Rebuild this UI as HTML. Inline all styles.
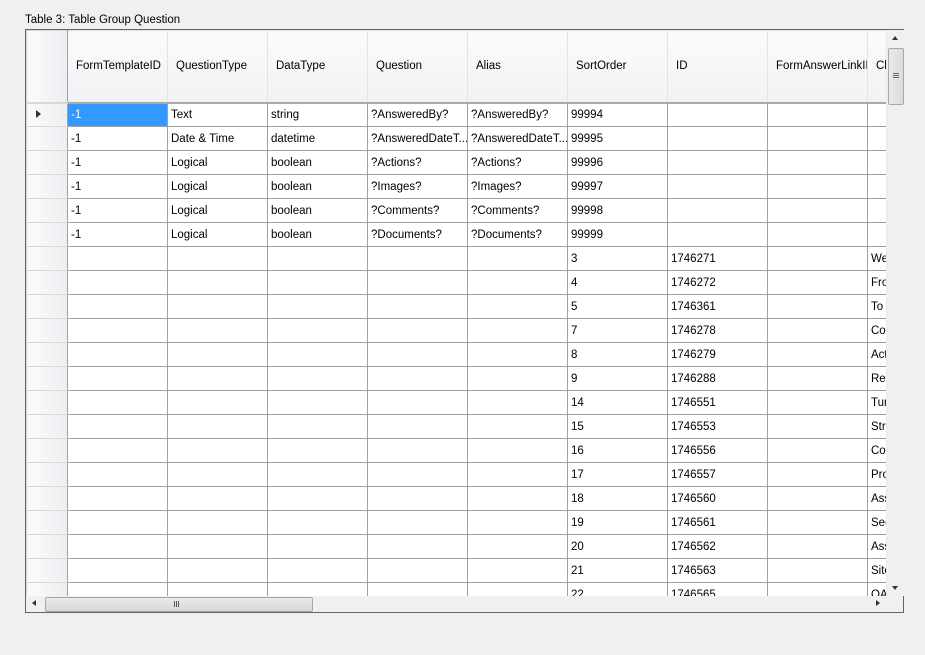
<!DOCTYPE html>
<html><head><meta charset="utf-8"><style>
body{margin:0;width:925px;height:655px;background:#f0f0f0;font-family:"Liberation Sans",sans-serif;font-size:11.5px;color:#000;position:relative;overflow:hidden}
#lbl{position:absolute;left:25px;top:14px;font-size:11.5px}
#box{position:absolute;left:25px;top:29px;width:877px;height:582px;border:1px solid #646464;background:#fff}
#clip{position:absolute;left:0;top:0;width:860px;height:566px;overflow:hidden;background:#fff}
table{border-collapse:collapse;table-layout:fixed;position:absolute;left:0;top:0;width:941px}
td,th{border:1px solid #a0a0a0;height:24px;padding:0 0 0 3px;white-space:nowrap;overflow:hidden;font-weight:normal;text-align:left;box-sizing:border-box}
th{height:72px;background:linear-gradient(#fbfbfc,#f1f2f4);border-color:#e2e3e6;border-bottom:2px solid #a8a8a8;padding-left:8px;color:#000}
td.rh,th.rh{background:linear-gradient(90deg,#fafbfc,#eceef1);border-color:#d8d8d8;border-right:1px solid #a0a0a0}
td.sel{background:#3399ff;color:#fff}
#vs{position:absolute;left:860px;top:0;width:17px;height:566px;background:#f0f0f0;border-left:1px solid #e8e8e8}
#hs{position:absolute;left:0;top:566px;width:860px;height:16px;background:#f0f0f0}
#corner{position:absolute;left:860px;top:566px;width:17px;height:16px;background:#f0f0f0}
.thumbv{position:absolute;left:1px;top:18px;width:14px;height:55px;border:1px solid #a8a8a8;border-radius:2px;background:linear-gradient(90deg,#eaeaea,#dcdcdc)}
.thumbh{position:absolute;left:19px;top:1px;width:266px;height:13px;border:1px solid #a8a8a8;border-radius:2px;background:linear-gradient(#eaeaea,#d8d8d8)}
.tri{position:absolute;width:0;height:0}
</style></head><body>
<div id="lbl">Table 3: Table Group Question</div>
<div id="box">
<div id="clip">
<table>
<colgroup><col style="width:41px"><col style="width:100px"><col style="width:100px"><col style="width:100px"><col style="width:100px"><col style="width:100px"><col style="width:100px"><col style="width:100px"><col style="width:100px"><col style="width:100px"></colgroup>
<tr><th class="rh"></th><th>FormTemplateID</th><th>QuestionType</th><th>DataType</th><th>Question</th><th>Alias</th><th>SortOrder</th><th>ID</th><th>FormAnswerLinkID</th><th>ChoiceText</th></tr>
<tr><td class="rh"><span style="display:inline-block;border-left:5px solid #333;border-top:4px solid transparent;border-bottom:4px solid transparent;margin-left:6px"></span></td><td class="sel">-1</td><td>Text</td><td>string</td><td>?AnsweredBy?</td><td>?AnsweredBy?</td><td>99994</td><td></td><td></td><td></td></tr>
<tr><td class="rh"></td><td>-1</td><td>Date &amp; Time</td><td>datetime</td><td>?AnsweredDateT...</td><td>?AnsweredDateT...</td><td>99995</td><td></td><td></td><td></td></tr>
<tr><td class="rh"></td><td>-1</td><td>Logical</td><td>boolean</td><td>?Actions?</td><td>?Actions?</td><td>99996</td><td></td><td></td><td></td></tr>
<tr><td class="rh"></td><td>-1</td><td>Logical</td><td>boolean</td><td>?Images?</td><td>?Images?</td><td>99997</td><td></td><td></td><td></td></tr>
<tr><td class="rh"></td><td>-1</td><td>Logical</td><td>boolean</td><td>?Comments?</td><td>?Comments?</td><td>99998</td><td></td><td></td><td></td></tr>
<tr><td class="rh"></td><td>-1</td><td>Logical</td><td>boolean</td><td>?Documents?</td><td>?Documents?</td><td>99999</td><td></td><td></td><td></td></tr>
<tr><td class="rh"></td><td></td><td></td><td></td><td></td><td></td><td>3</td><td>1746271</td><td></td><td>Week</td></tr>
<tr><td class="rh"></td><td></td><td></td><td></td><td></td><td></td><td>4</td><td>1746272</td><td></td><td>From</td></tr>
<tr><td class="rh"></td><td></td><td></td><td></td><td></td><td></td><td>5</td><td>1746361</td><td></td><td>To</td></tr>
<tr><td class="rh"></td><td></td><td></td><td></td><td></td><td></td><td>7</td><td>1746278</td><td></td><td>Contract</td></tr>
<tr><td class="rh"></td><td></td><td></td><td></td><td></td><td></td><td>8</td><td>1746279</td><td></td><td>Action</td></tr>
<tr><td class="rh"></td><td></td><td></td><td></td><td></td><td></td><td>9</td><td>1746288</td><td></td><td>Remarks</td></tr>
<tr><td class="rh"></td><td></td><td></td><td></td><td></td><td></td><td>14</td><td>1746551</td><td></td><td>Turn</td></tr>
<tr><td class="rh"></td><td></td><td></td><td></td><td></td><td></td><td>15</td><td>1746553</td><td></td><td>Street</td></tr>
<tr><td class="rh"></td><td></td><td></td><td></td><td></td><td></td><td>16</td><td>1746556</td><td></td><td>Contract</td></tr>
<tr><td class="rh"></td><td></td><td></td><td></td><td></td><td></td><td>17</td><td>1746557</td><td></td><td>Project</td></tr>
<tr><td class="rh"></td><td></td><td></td><td></td><td></td><td></td><td>18</td><td>1746560</td><td></td><td>Assets</td></tr>
<tr><td class="rh"></td><td></td><td></td><td></td><td></td><td></td><td>19</td><td>1746561</td><td></td><td>Section</td></tr>
<tr><td class="rh"></td><td></td><td></td><td></td><td></td><td></td><td>20</td><td>1746562</td><td></td><td>Assigned</td></tr>
<tr><td class="rh"></td><td></td><td></td><td></td><td></td><td></td><td>21</td><td>1746563</td><td></td><td>Site</td></tr>
<tr><td class="rh"></td><td></td><td></td><td></td><td></td><td></td><td>22</td><td>1746565</td><td></td><td>QA</td></tr>
</table>
</div>
<div id="vs">
<div class="tri" style="left:5px;top:6px;border-left:3px solid transparent;border-right:3px solid transparent;border-bottom:4px solid #333"></div>
<div class="thumbv"><div style="position:absolute;left:4px;top:24px;width:6px;height:1px;background:#666;box-shadow:0 2px #666,0 4px #666"></div></div>
<div class="tri" style="left:5px;top:556px;border-left:3px solid transparent;border-right:3px solid transparent;border-top:4px solid #333"></div>
</div>
<div id="hs">
<div class="tri" style="left:6px;top:4px;border-top:3px solid transparent;border-bottom:3px solid transparent;border-right:4px solid #333"></div>
<div class="thumbh"><div style="position:absolute;left:128px;top:3px;width:1px;height:6px;background:#555;box-shadow:2px 0 #555,4px 0 #555"></div></div>
<div class="tri" style="left:850px;top:4px;border-top:3px solid transparent;border-bottom:3px solid transparent;border-left:4px solid #333"></div>
</div>
<div id="corner"></div>
</div>
</body></html>
